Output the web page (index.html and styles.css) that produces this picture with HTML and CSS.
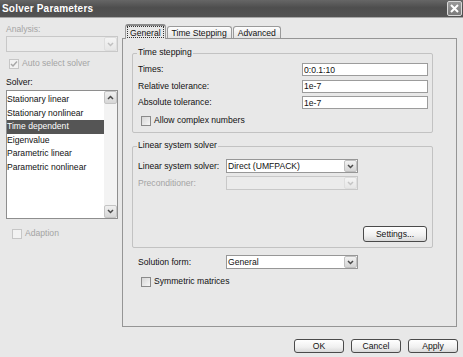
FILE: index.html
```html
<!DOCTYPE html>
<html>

<head>
    <title>Solver Parameters</title>
    <link rel="stylesheet" href="styles.css">
</head>

<body>
    <div class="dialog">
        <div class="titlebar">
            <span class="title">Solver Parameters</span>
            <span class="close">
                <svg width="9" height="9" viewBox="0 0 9 9"><path d="M1 1 L8 8 M8 1 L1 8" stroke="#fff" stroke-width="2" fill="none"/></svg>
            </span>
        </div>

        <div class="main">
            <div class="side">
                <div class="side-label off">Analysis:</div>
                <div class="combo combo-wide off">
                    <span class="combo-value"></span>
                    <span class="drop"><svg width="7" height="5" viewBox="0 0 7 5"><path d="M1 1 L3.5 3.5 L6 1" stroke="#c0c0c0" stroke-width="1.5" fill="none"/></svg></span>
                </div>
                <div class="check off auto">
                    <span class="box"><svg width="8" height="8" viewBox="0 0 8 8"><path d="M1 4 L3 6 L7 1.5" stroke="#a8a8a8" stroke-width="1.5" fill="none"/></svg></span>
                    Auto select solver
                </div>
                <div class="side-label solver">Solver:</div>
                <div class="listbox">
                    <ul class="items">
                        <li>Stationary linear</li>
                        <li>Stationary nonlinear</li>
                        <li class="selected">Time dependent</li>
                        <li>Eigenvalue</li>
                        <li>Parametric linear</li>
                        <li>Parametric nonlinear</li>
                    </ul>
                    <div class="scrollbar">
                        <span class="sb-btn"><svg width="7" height="5" viewBox="0 0 7 5"><path d="M1 4 L3.5 1.5 L6 4" stroke="#4a4a4a" stroke-width="1.5" fill="none"/></svg></span>
                        <span class="sb-track"></span>
                        <span class="sb-btn"><svg width="7" height="5" viewBox="0 0 7 5"><path d="M1 1 L3.5 3.5 L6 1" stroke="#4a4a4a" stroke-width="1.5" fill="none"/></svg></span>
                    </div>
                </div>
                <div class="check off adaption">
                    <span class="box"></span>
                    Adaption
                </div>
            </div>

            <div class="tabs">
                <div class="tabstrip">
                    <div class="tab active"><span class="focus">General</span></div>
                    <div class="tab">Time Stepping</div>
                    <div class="tab">Advanced</div>
                </div>

                <div class="panel">
                    <div class="group first">
                        <div class="group-title">Time stepping</div>
                        <div class="fields">
                            <div class="field">
                                <span class="field-label">Times:</span>
                                <input class="entry" type="text" value="0:0.1:10">
                            </div>
                            <div class="field">
                                <span class="field-label">Relative tolerance:</span>
                                <input class="entry" type="text" value="1e-7">
                            </div>
                            <div class="field">
                                <span class="field-label">Absolute tolerance:</span>
                                <input class="entry" type="text" value="1e-7">
                            </div>
                        </div>
                        <div class="check complex">
                            <span class="box"></span>
                            Allow complex numbers
                        </div>
                    </div>

                    <div class="group second">
                        <div class="group-title">Linear system solver</div>
                        <div class="row linsolver">
                            <span class="row-label">Linear system solver:</span>
                            <div class="combo">
                                <span class="combo-value">Direct (UMFPACK)</span>
                                <span class="drop"><svg width="7" height="5" viewBox="0 0 7 5"><path d="M1 1 L3.5 3.5 L6 1" stroke="#4a4a4a" stroke-width="1.5" fill="none"/></svg></span>
                            </div>
                        </div>
                        <div class="row precond">
                            <span class="row-label off">Preconditioner:</span>
                            <div class="combo off">
                                <span class="combo-value"></span>
                                <span class="drop"><svg width="7" height="5" viewBox="0 0 7 5"><path d="M1 1 L3.5 3.5 L6 1" stroke="#c4c4c4" stroke-width="1.5" fill="none"/></svg></span>
                            </div>
                        </div>
                        <button class="btn settings">Settings...</button>
                    </div>

                    <div class="row solution">
                        <span class="row-label">Solution form:</span>
                        <div class="combo">
                            <span class="combo-value">General</span>
                            <span class="drop"><svg width="7" height="5" viewBox="0 0 7 5"><path d="M1 1 L3.5 3.5 L6 1" stroke="#4a4a4a" stroke-width="1.5" fill="none"/></svg></span>
                        </div>
                    </div>
                    <div class="check symmetric">
                        <span class="box"></span>
                        Symmetric matrices
                    </div>
                </div>
            </div>
        </div>

        <div class="buttons">
            <button class="btn">OK</button>
            <button class="btn">Cancel</button>
            <button class="btn">Apply</button>
        </div>
    </div>
</body>

</html>
```

FILE: styles.css
```css
* {
    box-sizing: border-box;
}

body {
    margin: 0;
    font-family: "Liberation Sans", Arial, sans-serif;
    font-size: 8.6px;
    line-height: 11px;
    color: #111;
    background-color: #e8e8e8;
}

.dialog {
    width: 463px;
    height: 357px;
    display: flex;
    flex-direction: column;
    overflow: hidden;
}

.titlebar {
    height: 18px;
    display: flex;
    align-items: center;
    justify-content: space-between;
    padding: 0 1px 0 2px;
    background-image: linear-gradient(#666666, #4e4e4e 45%, #535353);
    border-bottom: 1px solid #a8a8a8;
}

.title {
    color: #fff;
    font-weight: bold;
    font-size: 10px;
    letter-spacing: 0.2px;
}

.close {
    width: 15px;
    height: 15px;
    display: flex;
    align-items: center;
    justify-content: center;
    border: 1px solid #d8d8d8;
    border-radius: 2px;
    background-image: linear-gradient(#9a9a9a, #7a7a7a);
}

.off {
    color: #a4a4a4;
}

/* left column */

.main {
    display: flex;
    height: 309px;
}

.side {
    width: 122px;
    padding-left: 6px;
    display: flex;
    flex-direction: column;
    align-items: flex-start;
}

.side-label {
    margin-top: 6px;
}

.side-label.solver {
    margin-top: 8px;
}

.combo {
    width: 132px;
    height: 14px;
    display: flex;
    align-items: stretch;
    background-color: #fff;
    border: 1px solid #979797;
}

.combo-wide {
    width: 112px;
    height: 16px;
    margin-top: 1px;
}

.combo.off {
    background-color: #ebebeb;
    border-color: #c8c8c8;
}

.combo-value {
    flex: 1;
    padding-left: 1px;
    line-height: 12px;
    white-space: nowrap;
}

.drop {
    width: 13px;
    display: flex;
    align-items: center;
    justify-content: center;
    border: 1px solid #c0c0c0;
    border-radius: 2px;
    background-image: linear-gradient(#f2f2f2, #d4d4d4);
}

.off .drop {
    border-color: #dedede;
    background-image: linear-gradient(#f4f4f4, #e6e6e6);
}

.check {
    display: flex;
    align-items: center;
    gap: 3px;
    height: 11px;
}

.box {
    width: 10px;
    height: 10px;
    display: flex;
    align-items: center;
    justify-content: center;
    border: 1px solid #8a8a8a;
    background-image: linear-gradient(135deg, #d6d6d6, #f6f6f6);
}

.check.off .box {
    border-color: #c6c6c6;
    background-image: none;
    background-color: #f2f2f2;
}

.auto {
    margin-top: 6px;
    padding-left: 3px;
}

.adaption {
    margin-top: 9px;
    padding-left: 6px;
}

.listbox {
    margin-top: 2px;
    width: 112px;
    height: 129px;
    display: flex;
    background-color: #fff;
    border: 1px solid #8e8e8e;
}

.items {
    flex: 1;
    list-style: none;
    margin: 0;
    padding: 2px 0 0 0;
}

.items li {
    height: 13.5px;
    line-height: 13.5px;
    white-space: nowrap;
}

.items li.selected {
    background-color: #555;
    color: #fff;
}

.scrollbar {
    width: 13px;
    display: flex;
    flex-direction: column;
    background-color: #f3f3f3;
}

.sb-btn {
    height: 13px;
    display: flex;
    align-items: center;
    justify-content: center;
    border: 1px solid #c4c4c4;
    border-radius: 2px;
    background-image: linear-gradient(#f0f0f0, #d6d6d6);
}

.sb-track {
    flex: 1;
}

/* tabs */

.tabs {
    width: 335px;
    padding-top: 6px;
    display: flex;
    flex-direction: column;
}

.tabstrip {
    height: 14px;
    display: flex;
    align-items: flex-end;
    gap: 1px;
    padding-left: 3px;
}

.tab {
    height: 12px;
    padding: 1px 4px 0;
    border: 1px solid #9a9a9a;
    border-bottom: none;
    border-radius: 3px 3px 0 0;
    background-image: linear-gradient(#fdfdfd, #e4e4e4);
}

.tab.active {
    height: 15px;
    margin-bottom: -1px;
    padding: 0 1px;
    position: relative;
    z-index: 1;
    border-top: 2px solid #8a8a8a;
    background-image: none;
    background-color: #e8e8e8;
}

.focus {
    display: block;
    padding: 1px 2px 0;
    height: 12px;
    border: 1px dotted #333;
}

.panel {
    height: 289px;
    padding: 14px 23px 0 9px;
    border: 1px solid #959595;
    background-color: #e8e8e8;
}

.group {
    display: flex;
    flex-direction: column;
    border: 1px solid #c2c2c2;
    border-radius: 2px;
    padding: 0 4px 6px 5px;
}

.group-title {
    margin: -7px 0 0 -1px;
    padding: 0 1px;
    align-self: flex-start;
    background-color: #e8e8e8;
}

.fields {
    display: flex;
    flex-direction: column;
    gap: 3.5px;
    margin-top: 5px;
}

.field {
    display: flex;
    align-items: center;
    height: 13px;
}

.field-label {
    flex: 1;
}

.entry {
    width: 126px;
    height: 13px;
    margin: 0;
    padding: 0 1px;
    font: inherit;
    color: #111;
    background-color: #fff;
    border: 1px solid #9c9c9c;
    outline: none;
}

.complex {
    margin-top: 6px;
    padding-left: 3px;
}

.group.second {
    margin-top: 13px;
    padding-bottom: 5px;
}

.row {
    display: flex;
    align-items: center;
}

.row-label {
    width: 88px;
}

.linsolver {
    margin-top: 8px;
}

.precond {
    margin-top: 3px;
}

.btn {
    width: 50px;
    height: 14px;
    margin: 0;
    padding: 0;
    font: inherit;
    line-height: 11px;
    color: #111;
    border: 1px solid #4a4a4a;
    border-radius: 3px;
    background-image: linear-gradient(#ffffff, #f0f0f0 60%, #d8d8d8);
}

.settings {
    width: 64px;
    height: 16px;
    margin: 36px 1px 0 0;
    align-self: flex-end;
}

.solution {
    margin-top: 7px;
    padding-left: 6px;
}

.symmetric {
    margin-top: 7px;
    padding-left: 9px;
}

.buttons {
    margin-top: 12px;
    display: flex;
    justify-content: flex-end;
    gap: 7px;
    padding-right: 5px;
}
```
